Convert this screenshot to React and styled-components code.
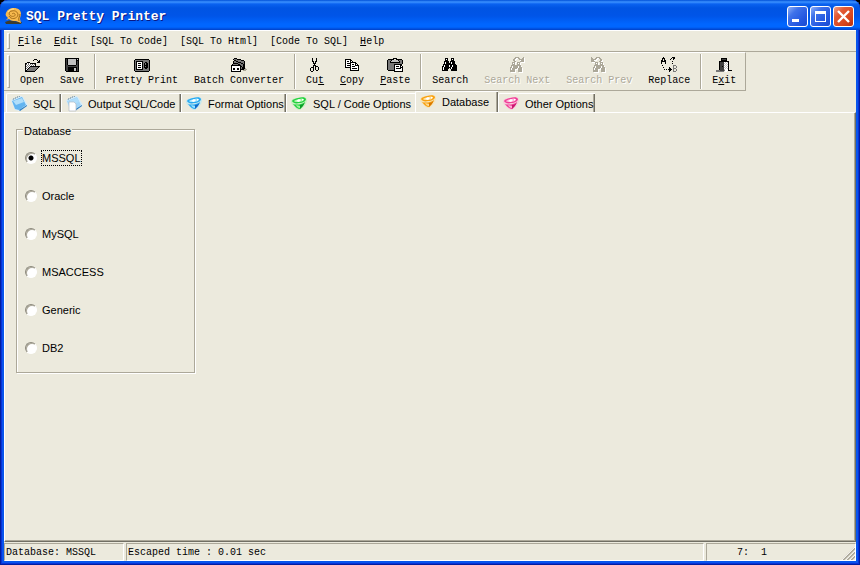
import React, { useState } from 'react';
import styled, { createGlobalStyle, css } from 'styled-components';

const GlobalStyle = createGlobalStyle`
  * {
    box-sizing: border-box;
  }
  body {
    margin: 0;
    background: #000;
  }
  button {
    margin: 0;
    padding: 0;
    border: 0;
    background: none;
    color: inherit;
    font: inherit;
  }
`;

const mono = '"Liberation Mono", monospace';
const sans = '"Liberation Sans", sans-serif';

const Window = styled.div`
  display: flex;
  flex-direction: column;
  min-height: 100vh;
  padding: 0 4px 4px;
  border-radius: 8px 8px 0 0;
  background: #eceadd;
  box-shadow: inset 0 0 0 1px #001ea0, inset 0 0 0 2px #0831d9, inset 0 0 0 4px #0855ec;
  color: #000;
  font: 10px/14px ${mono};
  overflow: hidden;
`;

const TitleBar = styled.header`
  display: flex;
  align-items: center;
  height: 30px;
  margin: 0 -4px;
  padding: 2px 6px 0 5px;
  border-radius: 8px 8px 0 0;
  background: linear-gradient(
    #0050d8 0,
    #3c92ff 2px,
    #0a62f0 4px,
    #0054e3 8px,
    #0055e8 16px,
    #0066ff 24px,
    #0066ff 27px,
    #0040c8 30px
  );
`;

const Title = styled.h1`
  flex: 1;
  margin: 0;
  padding: 2px 0 0 4px;
  color: #fff;
  font: bold 13px/16px ${mono};
  text-shadow: 1px 1px 0 #0a1883;
`;

const CaptionButtons = styled.div`
  display: flex;
  gap: 2px;
`;

const CaptionButton = styled.button`
  width: 21px;
  height: 21px;
  border: 1px solid #fff;
  border-radius: 3px;
  background: ${(p) =>
    p.$close
      ? 'linear-gradient(135deg, #f0a088 0, #e25a36 30%, #d8451d 70%, #b83010 100%)'
      : 'linear-gradient(135deg, #8fb0f8 0, #3f72ea 30%, #2457e0 70%, #1a4bd0 100%)'};

  svg {
    display: block;
  }
`;

const MenuBar = styled.nav`
  display: flex;
  align-items: center;
  height: 22px;
  padding-left: 3px;
  border-top: 1px solid #fff;
  border-bottom: 1px solid #aca899;
`;

const Gripper = styled.span`
  align-self: stretch;
  width: 3px;
  margin: 2px 2px 2px 0;
  border: 1px solid;
  border-color: #fff #aca899 #aca899 #fff;
`;

const MenuItem = styled.button`
  height: 18px;
  padding: 2px 6px 0;
`;

const ToolBar = styled.div`
  display: flex;
  align-self: flex-start;
  height: 39px;
  padding: 0 1px 0 3px;
  border: solid;
  border-color: #fff #aca899 #aca899 #fff;
  border-width: 1px 1px 1px 0;
`;

const ToolButton = styled.button`
  display: flex;
  flex-direction: column;
  align-items: center;
  gap: 1px;
  padding: 4px 8px 0;
  white-space: nowrap;

  &:disabled {
    color: #aca899;
    text-shadow: 1px 1px 0 #fff;
  }
  &:disabled svg {
    filter: drop-shadow(1px 1px 0 #fff);
  }
`;

const Separator = styled.span`
  width: 2px;
  margin: 1px 2px;
  border-left: 1px solid #aca899;
  border-right: 1px solid #fff;
`;

const TabList = styled.div`
  display: flex;
  align-items: flex-end;
  height: 21px;
  padding-left: 2px;
`;

const Tab = styled.button`
  display: flex;
  align-items: center;
  gap: 5px;
  width: ${(p) => p.$width}px;
  height: 19px;
  padding: 1px 4px 0;
  border: solid;
  border-width: 1px 0 0 1px;
  border-color: #fff;
  border-radius: 2px 0 0 0;
  box-shadow: inset -1px 0 0 #716f64, inset -2px 0 0 #aca899;
  font: 11px/14px ${sans};
  white-space: nowrap;

  ${(p) =>
    p.$flat &&
    css`
      box-shadow: none;
    `}

  &[aria-selected='true'] {
    height: 21px;
    padding-bottom: 2px;
  }

  svg {
    flex: none;
  }
`;

const Page = styled.main`
  flex: 1;
  padding: 8px 12px 12px 11px;
  border: 1px solid;
  border-color: #fff #716f64 #716f64 #fff;
  box-shadow: inset -1px -1px 0 #aca899;
  font: 11px/14px ${sans};
`;

const GroupBox = styled.fieldset`
  width: 179px;
  margin: 0;
  padding: 12px 8px 16px;
  border: 1px solid #aca899;
  box-shadow: 1px 1px 0 #fff, inset 1px 1px 0 #fff;

  legend {
    margin-left: -2px;
    padding: 3px 1px 0;
    background: #eceadd;
  }
`;

const RadioList = styled.div`
  display: flex;
  flex-direction: column;
  gap: 22px;
`;

const RadioLabel = styled.label`
  display: flex;
  align-items: center;
  align-self: flex-start;
  gap: 4px;
  height: 16px;

  span {
    border: 1px dotted ${(p) => (p.$focused ? '#000' : 'transparent')};
  }
`;

const Radio = styled.input`
  appearance: none;
  flex: none;
  width: 12px;
  height: 12px;
  margin: 0;
  border: 1px solid;
  border-color: #8c897c #fff #fff #8c897c;
  border-radius: 50%;
  background: #fff;
  box-shadow: inset 1px 1px 0 #aca899;
  outline: none;

  &:checked {
    background: radial-gradient(circle at 5px 5px, #000 2px, #fff 3px);
  }
`;

const StatusBar = styled.footer`
  display: flex;
  gap: 2px;
  height: 19px;
  padding-top: 1px;
`;

const StatusPanel = styled.div`
  position: relative;
  flex: ${(p) => (p.$width ? `0 0 ${p.$width}px` : 1)};
  padding: 2px 1px 0;
  padding-left: ${(p) => p.$indent || 1}px;
  border: 1px solid;
  border-color: #aca899 #fff #fff #aca899;
  white-space: pre;
`;

const SizeGrip = styled.svg`
  position: absolute;
  right: 0;
  bottom: 0;
`;

// Toolbar bitmaps, one character per pixel.
const palette = {
  K: '#000',
  G: '#787878',
  D: '#404040',
  L: '#c0c0c0',
  W: '#fff',
  M: '#aca899',
};

const bitmaps = {
  open: [
    '................',
    '................',
    '..........KKK...',
    '.........K...K.K',
    '..............KK',
    '...KKK.......KKK',
    '.KKWGWKKKKKK....',
    '.KGWGWGWGWGK....',
    '.KWGWGWGWGWK....',
    '.KGWGWKKKKKKKKKK',
    '.KWGWKGGGGGGGGK.',
    '.KGWKGGGGGGGGK..',
    '.KWKGGGGGGGGK...',
    '.KKGGGGGGGGK....',
    '.KKKKKKKKKK.....',
  ],
  save: [
    '................',
    '.KKKKKKKKKKKKKK.',
    '.KDKLLLLLLLLKLK.',
    '.KDKLLLLLLLLKKK.',
    '.KDKLLLLLLLLKDK.',
    '.KDKLLLLLLLLKDK.',
    '.KDKLLLLLLLLKDK.',
    '.KDKLLLLLLLLKDK.',
    '.KDDKKKKKKKKDDK.',
    '.KDDDDDDDDDDDDK.',
    '.KDDKKKKKKKKKDK.',
    '.KDDKKKKKKLLKDK.',
    '.KDDKKKKKKLLKDK.',
    '.KDDKKKKKKLLKDK.',
    '..KKKKKKKKKKKKK.',
  ],
  print: [
    '................',
    '................',
    '.KKKKKKKKKKKKKK.',
    'KGGGGGGGGGGGGGGK',
    'KGKKKKKKKGGGGGGK',
    'KGKWWWWWKGGKKGGK',
    'KGKWKKKWKGKGKKGK',
    'KGKWWWWWKGKGKKGK',
    'KGKWKKKWKGKKKKGK',
    'KGKWWWWWKGKGKKGK',
    'KGKWKKKWKGKKKKGK',
    'KGKWWWWWKGGKKGGK',
    'KGKKKKKKKGGGGGGK',
    'KGGGGGGGGGGGGGGK',
    '.KKKKKKKKKKKKKK.',
  ],
  batch: [
    '................',
    '...KKK..........',
    '..KGGGKKKK......',
    '...KKGGGGGKKK...',
    '..KGGKKGGGGGGK..',
    '..KGGGGKKKGGGK..',
    '..KKKKKGGGKKGK..',
    '.KGGGGGKKGGGKK..',
    'KKKKKKKKKKGGKK..',
    'KWWWWWWWWKKGKK..',
    'KWWWWWWWWKGKKK..',
    'KWKKWWKKWKGKKKM.',
    'KWKKWWKKWKKKKMMM',
    'KWWWWWWWWK..MMM.',
    'KKKKKKKKKK......',
  ],
  cut: [
    '................',
    '.....K...K......',
    '.....K...K......',
    '.....K...K......',
    '.....KK.KK......',
    '......K.K.......',
    '......KKK.......',
    '.......K........',
    '......KKK.......',
    '......K.KKK.....',
    '....KKK.K..K....',
    '...K..K.K..K....',
    '...K..K.K..K....',
    '...K..K..KK.....',
    '....KK..........',
  ],
  copy: [
    '................',
    '................',
    '.KKKKKK.........',
    '.KWWWWKK........',
    '.KWKKWKWK.......',
    '.KWWWWKKKKKK....',
    '.KWKKKKWWWWKK...',
    '.KWWWWKWKKWKWK..',
    '.KWKKKKWWWWKKKK.',
    '.KWWWWKWKKKWWWK.',
    '.KKKKKKWWWWWWWK.',
    '......KWKKKKKWK.',
    '......KWWWWWWWK.',
    '......KKKKKKKKK.',
    '................',
  ],
  paste: [
    '................',
    '......KKKK......',
    '.KKKKKK..KKKKKK.',
    'KGGGKLLLLLLKGGGK',
    'KGGKLLLLLLLLKGGK',
    'KGGKKKKKKKKKKGGK',
    'KGGGGGGGGGGGGGGK',
    'KGGGGGGKKKKKKKK.',
    'KGGGGGGKWWWWWKK.',
    'KGGGGGGKWKKKWKWK',
    'KGGGGGGKWWWWWKKK',
    'KGGGGGGKWKKKKKWK',
    'KGGGGGGKWWWWWWWK',
    '.KKKKKKKWWWWWWWK',
    '.......KKKKKKKKK',
  ],
  search: [
    '................',
    '...KKK...KKK....',
    '...KWK...KWK....',
    '...KKK...KKK....',
    '..KKKKK.KKKKK...',
    '..KWKKK.KWKKK...',
    '..KWKKKKKWKKK...',
    '.KKKKKKKKKKKKK..',
    '.KWKKKKWKKWKKKK.',
    'KKWKKKKWKKWKKKK.',
    'KWKKKKKKKWKKKKK.',
    'KWKKKKK.KWKKKKK.',
    'KWKKKK...KKKKKK.',
    'KKKKKK...KKKKKK.',
    '................',
  ],
  searchNext: [
    '......MMMM....M.',
    '.....MM..MM..MM.',
    '....MM....MMMMM.',
    '....MM......MMM.',
    '.....MM....MMMM.',
    '...MMM..MMM.....',
    '...M.M..M.M.....',
    '...MMM..MMM.....',
    '..MMMMMMMMMM....',
    '..M.MMMMM.MM....',
    '.MM.MMMMM.MMM...',
    '.M.MMMMM.MMMM...',
    '.M.MMM...MMMM...',
    '.MMMMM...MMMM...',
    '.MMMMM...MMMM...',
  ],
  searchPrev: [
    'M....MMMM.......',
    'MM..MM..MM......',
    'MMMMM....MM.....',
    'MMM......MM.....',
    'MMMM....MM......',
    '....MMM..MMM....',
    '....M.M..M.M....',
    '....MMM..MMM....',
    '...MMMMMMMMMM...',
    '...M.MMMMM.MM...',
    '..MM.MMMMM.MMM..',
    '..M.MMMMM.MMMM..',
    '..M.MMM...MMMM..',
    '..MMMMM...MMMM..',
    '..MMMMM...MMMM..',
  ],
  replace: [
    '..K........KKK..',
    '.KKK......K.KK..',
    '.K.K.....K..K...',
    'KK.KK...........',
    'KKKKK......K....',
    'K...K...........',
    'K...K......K....',
    '................',
    '.K..........GGG.',
    '............G..G',
    '..K.....K...G..G',
    '........KK..GGG.',
    '...K.K.KKKK.G..G',
    '........KK..G..G',
    '........K...GGG.',
  ],
  exit: [
    '................',
    '.....KKKKKK.....',
    '.....KDDDDK.....',
    '.....KKKKKK.....',
    '...KKKKKKKKKK...',
    '...KDDDDWLWLK...',
    '...KDDDDLWLWK...',
    '...KDDDDWLWLK...',
    '...KDDDDLWLWK...',
    '...KDDKDWLWLK...',
    '...KDDDDLWLWK...',
    '...KDDDDWLWLK...',
    '...KDDDDLWWWK...',
    'GGGGDDDDGWWWKKKK',
    'GGGGGGGG.WW.....',
  ],
};

const PixelIcon = ({ name }) => (
  <svg width="16" height="16" viewBox="0 0 16 16" shapeRendering="crispEdges" aria-hidden="true">
    {bitmaps[name].flatMap((row, y) =>
      [...row.matchAll(/([A-Z])\1*/g)].map((run) => (
        <rect
          key={`${run.index}-${y}`}
          x={run.index}
          y={y}
          width={run[0].length}
          height="1"
          fill={palette[run[1]]}
        />
      ))
    )}
  </svg>
);

const SnailIcon = () => (
  <svg width="17" height="17" viewBox="0 0 17 17" aria-hidden="true">
    <path d="M0 14c3-1 5-2 8-1 3 0 6 1 9 1l-1 2H1z" fill="#3c3c30" />
    <path
      d="M1 5C2 2 5 0 9 0c4 0 7 2 7 6 0 2-1 3-1 5l1 4-5-2c-3 0-5 0-7-2L1 12l2-2C1 8 0 7 1 5z"
      fill="#f7b94e"
    />
    <path
      d="M4 8c2 4 8 3 9-1 0-3-3-5-6-4-3 0-4 4-1 5 2 1 5 0 4-2-1-1-2-1-3 0"
      fill="none"
      stroke="#a8701c"
      strokeWidth="1"
    />
    <path d="M3 4c1-2 3-3 6-3" fill="none" stroke="#ffe39a" />
    <path d="M15 6c0 2-2 4-1 7" fill="none" stroke="#9a6414" />
  </svg>
);

const NoteIcon = ({ sheet }) => (
  <svg width="17" height="17" viewBox="0 0 17 17" aria-hidden="true">
    <path d="M0 5 10 1l2 1 5 8-8 6-5-1z" fill="#d4ecfb" />
    <path d="m1 6 10-4 4 8-7 5-4-1z" fill={sheet ? '#a4d6f8' : '#62b4f0'} />
    <path d="m2 6 9-3 2 4-8 3z" fill="#b0defa" />
    <path d="m8 15 8-5v1l-7 5z" fill="#2a7cc0" />
    <path d="m2 5 1-2m1 1 1-2m1 1 1-2m1 1 1-1" stroke="#6e8ea4" strokeWidth="0.8" />
    {sheet && <path d="M3 7h5l2 2v7H3z" fill="#fff" stroke="#b4bcc4" strokeWidth="0.7" />}
  </svg>
);

const GemIcon = ({ light, main, dark }) => (
  <svg width="17" height="17" viewBox="0 0 17 17" aria-hidden="true">
    <path d="M0 6c1-2 3-3 6-3l7-1c2 0 3 2 3 4-1 4-4 7-7 9-2 0-4-1-6-4C1 10 0 8 0 6z" fill={light} opacity="0.5" />
    <path d="M1 6c1-2 3-2 6-3 4-1 7-1 8 1 0 2-3 4-7 4-3 1-6 0-7-2z" fill={main} />
    <path d="M3 6c1-1 3-2 6-2 2-1 4 0 4 1-1 1-3 2-5 2-3 0-5 0-5-1z" fill={light} />
    <path d="m5 6 3-2 2 1-2 2zM11 4h2l-2 2z" fill="#fff" />
    <path d="M2 9c3 1 8 1 12-2-1 3-3 5-5 7-2 0-5-2-7-5z" fill={main} />
    <path d="m5 10 4 1v2c-2 0-3-1-4-3z" fill={light} />
    <path d="M9 10c2 0 4-1 5-3-1 3-3 5-5 7z" fill={dark} />
  </svg>
);

const MinimizeGlyph = () => (
  <svg width="19" height="19" viewBox="0 0 19 19" aria-hidden="true">
    <path d="M4 12h7v3H4z" fill="#fff" />
  </svg>
);

const MaximizeGlyph = () => (
  <svg width="19" height="19" viewBox="0 0 19 19" aria-hidden="true">
    <path d="M4 4h11v11H4zM5 7v7h9V7z" fill="#fff" fillRule="evenodd" />
  </svg>
);

const CloseGlyph = () => (
  <svg width="19" height="19" viewBox="0 0 19 19" aria-hidden="true">
    <path d="m4 4 11 11m0-11-11 11" stroke="#fff" strokeWidth="2.4" />
  </svg>
);

const menus = [
  <><u>F</u>ile</>,
  <><u>E</u>dit</>,
  '[SQL To Code]',
  '[SQL To Html]',
  '[Code To SQL]',
  <><u>H</u>elp</>,
];

const toolGroups = [
  [
    { icon: 'open', label: 'Open' },
    { icon: 'save', label: 'Save' },
  ],
  [
    { icon: 'print', label: 'Pretty Print' },
    { icon: 'batch', label: 'Batch Converter' },
  ],
  [
    { icon: 'cut', label: <>Cu<u>t</u></> },
    { icon: 'copy', label: <><u>C</u>opy</> },
    { icon: 'paste', label: <><u>P</u>aste</> },
  ],
  [
    { icon: 'search', label: 'Search' },
    { icon: 'searchNext', label: 'Search Next', disabled: true },
    { icon: 'searchPrev', label: 'Search Prev', disabled: true },
    { icon: 'replace', label: 'Replace' },
  ],
  [{ icon: 'exit', label: <>E<u>x</u>it</> }],
];

const tabs = [
  { label: 'SQL', width: 55, icon: <NoteIcon /> },
  { label: 'Output SQL/Code', width: 120, icon: <NoteIcon sheet /> },
  { label: 'Format Options', width: 105, icon: <GemIcon light="#9be4ff" main="#28a8f0" dark="#1468c8" /> },
  { label: 'SQL / Code Options', width: 129, icon: <GemIcon light="#a4f5a0" main="#22d040" dark="#0c9a28" />, flat: true },
  { label: 'Database', width: 83, icon: <GemIcon light="#ffdc90" main="#f8a010" dark="#d87800" /> },
  { label: 'Other Options', width: 97, icon: <GemIcon light="#ffb0d8" main="#f04098" dark="#c81870" /> },
];

const databases = ['MSSQL', 'Oracle', 'MySQL', 'MSACCESS', 'Generic', 'DB2'];

const App = () => {
  const [tab, setTab] = useState('Database');
  const [database, setDatabase] = useState('MSSQL');

  return (
    <>
      <GlobalStyle />
      <Window>
        <TitleBar>
          <SnailIcon />
          <Title>SQL Pretty Printer</Title>
          <CaptionButtons>
            <CaptionButton aria-label="Minimize"><MinimizeGlyph /></CaptionButton>
            <CaptionButton aria-label="Maximize"><MaximizeGlyph /></CaptionButton>
            <CaptionButton $close aria-label="Close"><CloseGlyph /></CaptionButton>
          </CaptionButtons>
        </TitleBar>

        <MenuBar>
          <Gripper />
          {menus.map((label, i) => (
            <MenuItem key={i}>{label}</MenuItem>
          ))}
        </MenuBar>

        <ToolBar role="toolbar">
          <Gripper />
          {toolGroups.map((group, i) => (
            <React.Fragment key={i}>
              {i > 0 && <Separator />}
              {group.map(({ icon, label, disabled }) => (
                <ToolButton key={icon} disabled={disabled}>
                  <PixelIcon name={icon} />
                  <span>{label}</span>
                </ToolButton>
              ))}
            </React.Fragment>
          ))}
        </ToolBar>

        <TabList role="tablist">
          {tabs.map(({ label, width, icon, flat }) => (
            <Tab
              key={label}
              role="tab"
              aria-selected={tab === label}
              $width={width}
              $flat={flat}
              onClick={() => setTab(label)}
            >
              {icon}
              {label}
            </Tab>
          ))}
        </TabList>

        <Page>
          <GroupBox>
            <legend>Database</legend>
            <RadioList>
              {databases.map((name) => (
                <RadioLabel key={name} $focused={name === database}>
                  <Radio
                    type="radio"
                    name="database"
                    checked={name === database}
                    onChange={() => setDatabase(name)}
                  />
                  <span>{name}</span>
                </RadioLabel>
              ))}
            </RadioList>
          </GroupBox>
        </Page>

        <StatusBar>
          <StatusPanel $width={120}>Database: {database}</StatusPanel>
          <StatusPanel>Escaped time : 0.01 sec</StatusPanel>
          <StatusPanel $width={150} $indent={30}>
            {'7:  1'}
            <SizeGrip width="13" height="13" viewBox="0 0 13 13" aria-hidden="true">
              <path d="M1 13 13 1M5 13l8-8M9 13l4-4" stroke="#aca899" strokeWidth="2" />
              <path d="M0 13 13 0M4 13l9-9M8 13l5-5" stroke="#fff" strokeWidth="0.8" />
            </SizeGrip>
          </StatusPanel>
        </StatusBar>
      </Window>
    </>
  );
};

export default App;
